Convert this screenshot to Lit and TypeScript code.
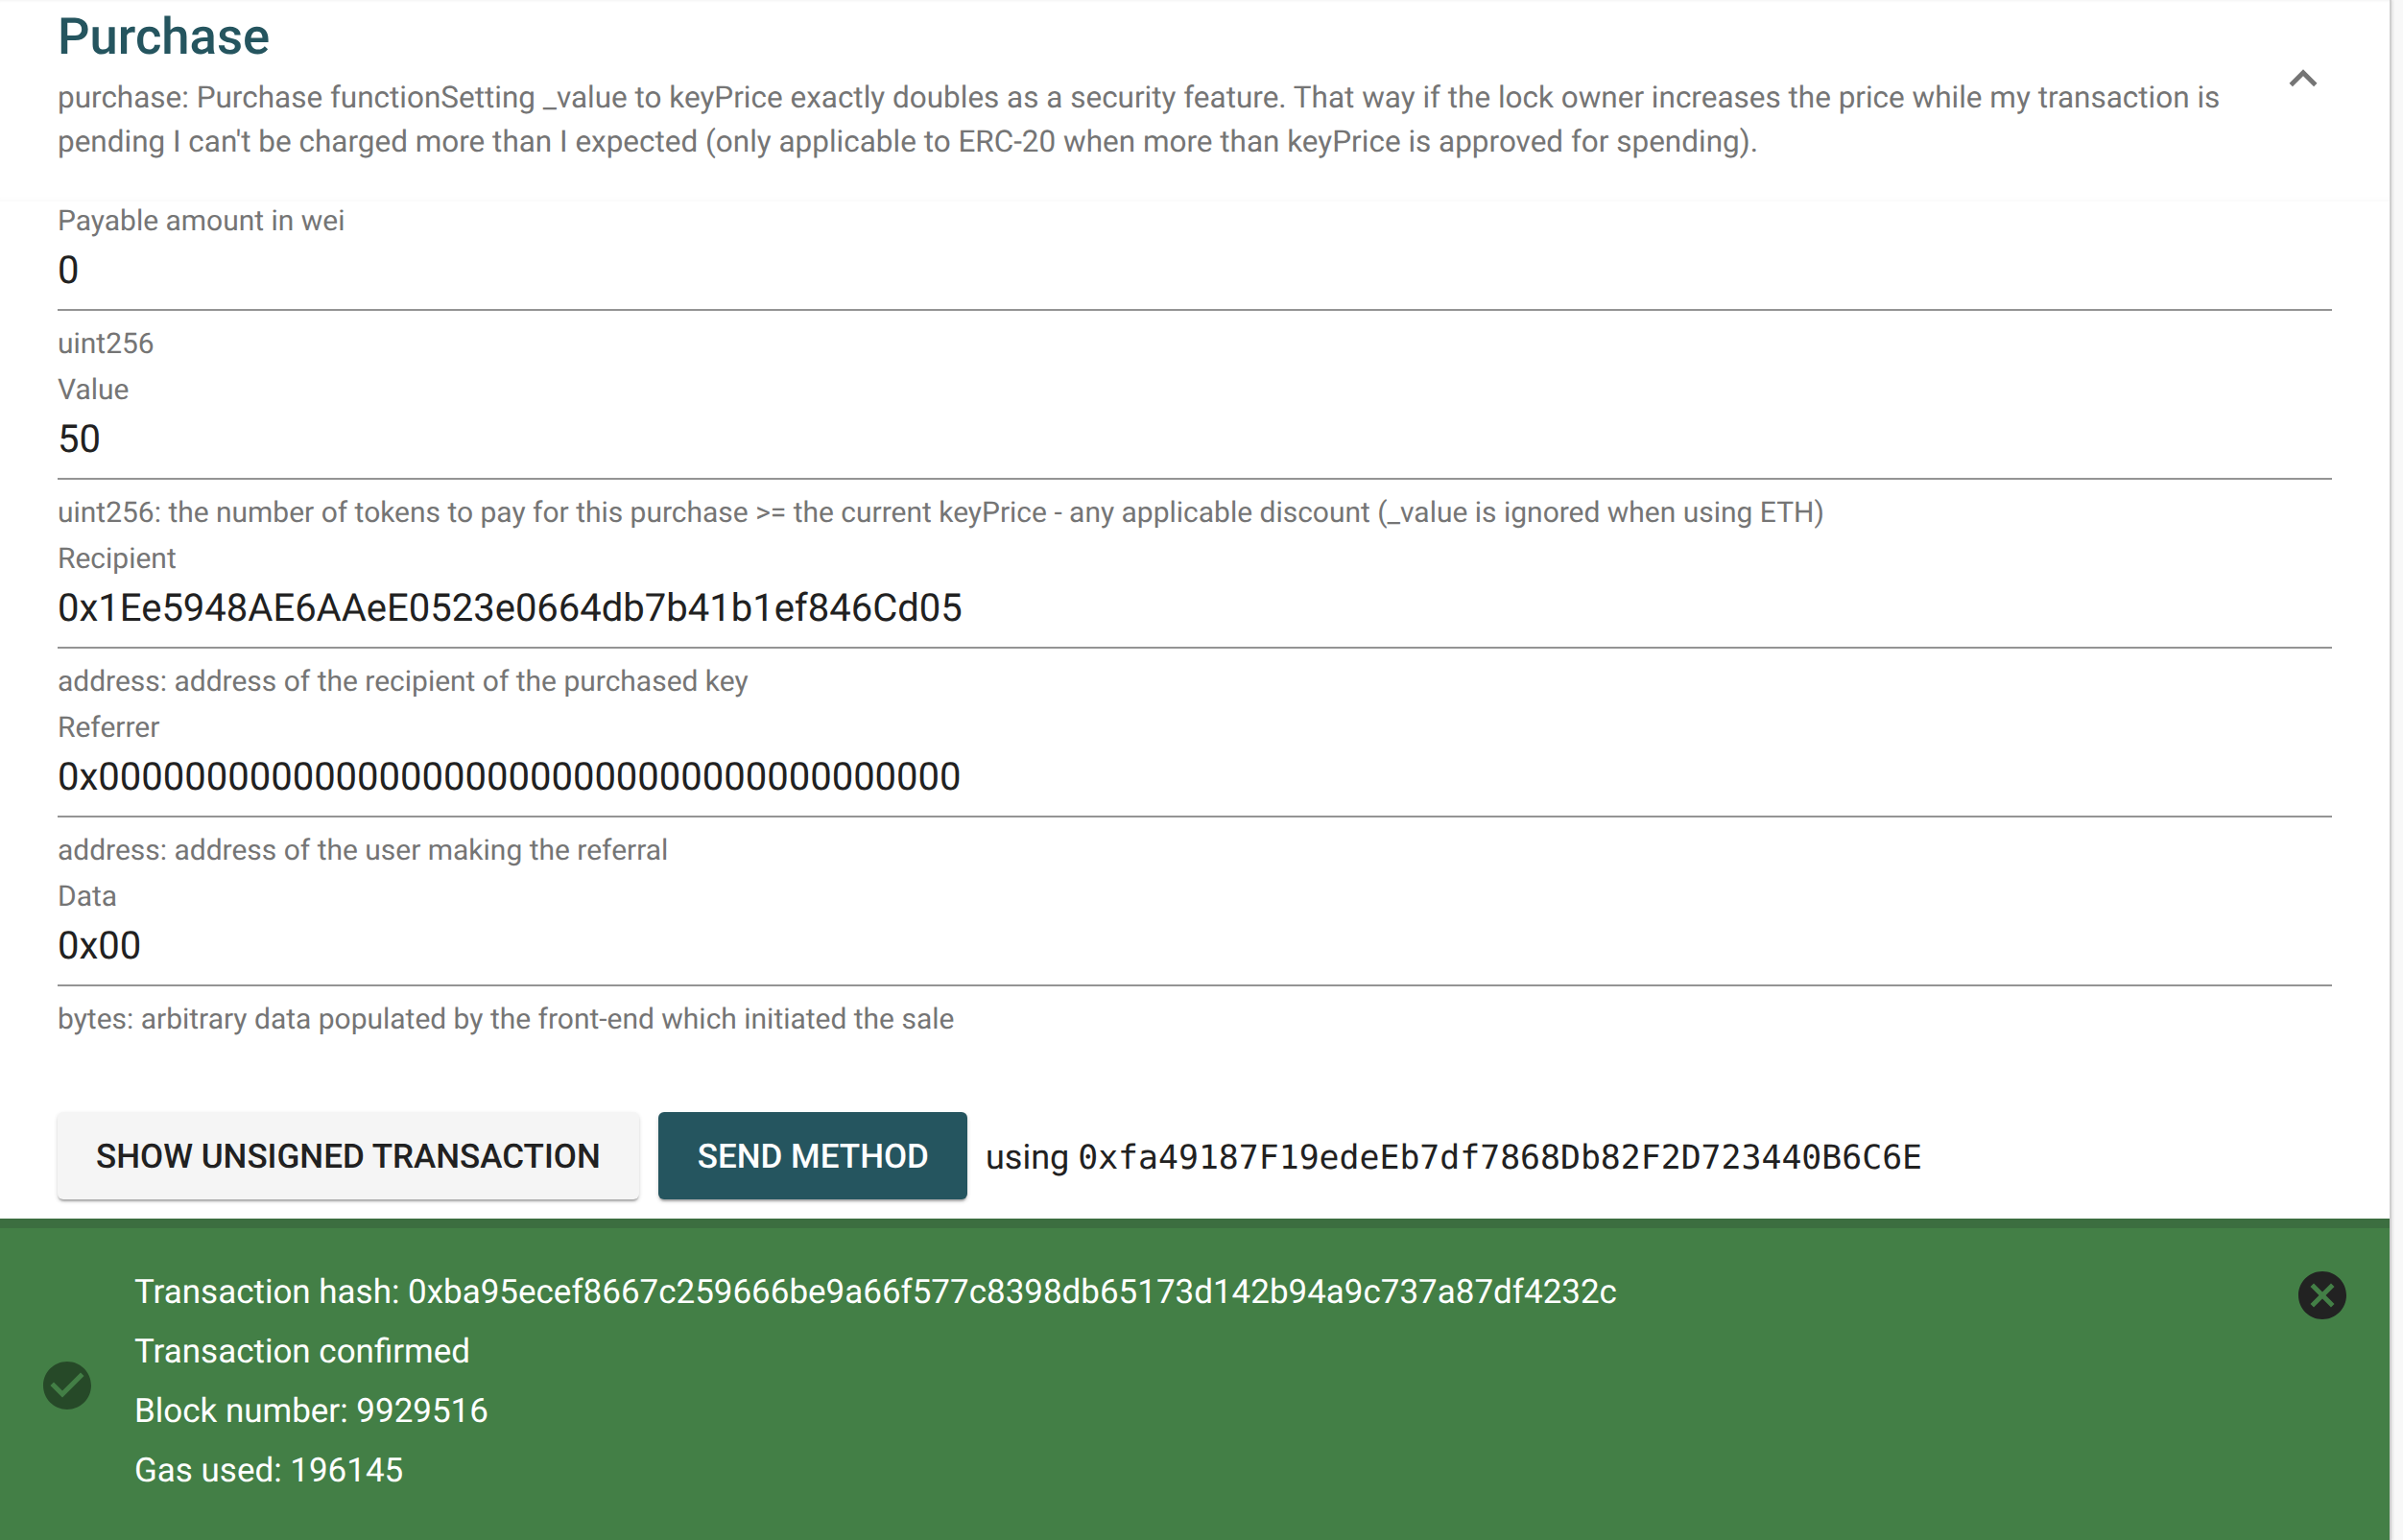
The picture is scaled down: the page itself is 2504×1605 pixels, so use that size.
import { LitElement, html, css, svg } from "lit";
import { customElement } from "lit/decorators.js";

const fields = [
  { label: "Payable amount in wei", value: "0", help: "" },
  { label: "Value", value: "50", help: "uint256: the number of tokens to pay for this purchase >= the current keyPrice - any applicable discount (_value is ignored when using ETH)", pre: "uint256" },
  { label: "Recipient", value: "0x1Ee5948AE6AAeE0523e0664db7b41b1ef846Cd05", help: "address: address of the recipient of the purchased key" },
  { label: "Referrer", value: "0x0000000000000000000000000000000000000000", help: "address: address of the user making the referral" },
  { label: "Data", value: "0x00", help: "bytes: arbitrary data populated by the front-end which initiated the sale" },
];

@customElement("app-root")
export class AppRoot extends LitElement {
  static styles = css`
    :host { display: block; width: 2504px; height: 1605px; overflow: hidden; background: #f8f8f8; font-family: Roboto, "Noto Sans", sans-serif; text-rendering: geometricPrecision; }
    .page { width: 2490px; height: 1605px; background: #fff; border-right: 2px solid #cfcfcf; box-shadow: 2px 0 2px #e6e6e6; display: flex; flex-direction: column; }
    .head { height: 210px; flex: none; box-sizing: border-box; padding: 0 60px; display: flex; align-items: flex-start; gap: 40px; background: #fff; box-shadow: inset 0 3px 3px -2px rgba(0,0,0,.05), inset 0 -8px 6px -6px rgba(0,0,0,.025); }
    .head-text { flex: 1; }
    h1 { margin: 0; font-size: 52.6px; line-height: 76px; font-weight: 500; color: #25555f; }
    .desc { font-size: 31.47px; line-height: 46px; color: #757575; margin-top: 3px; }
    .chev { width: 58px; height: 58px; margin-top: 53px; margin-right: 1px; fill: #757575; flex: none; }
    .form { padding: 0 60px; flex: 1; display: flex; flex-direction: column; }
    .field { display: flex; flex-direction: column; }
    .lab { font-size: 29.97px; line-height: 42px; color: #757575; margin-top: 3px; }
    .field:first-child .lab { margin-top: 0; }
    .val { font-size: 40px; line-height: 59px; height: 58px; padding-bottom: 12px; color: #212121; border-bottom: 2px solid #949494; }
    .help { font-size: 29.97px; line-height: 48px; color: #757575; margin-top: 11px; }
    .actions { display: flex; align-items: center; gap: 20px; margin-top: 72px; }
    .btn { height: 91px; box-sizing: border-box; border-radius: 6px; padding: 2px 40px 0; font-size: 35px; font-weight: 500; display: flex; align-items: center; box-shadow: 0 3px 2px -1px rgba(0,0,0,.25), 0 2px 4px rgba(0,0,0,.16); }
    .btn.light { background: #f5f5f5; color: #212121; }
    .btn.dark { background: #25555f; color: #fff; padding-left: 41px; }
    .using { font-size: 36px; color: #212121; padding-top: 2px; margin-left: -1px; }
    .mono { font-family: "DejaVu Sans Mono", monospace; font-size: 34.8px; }
    .note { height: 335px; flex: none; box-sizing: border-box; background: #437f46; border-top: 10px solid #3c6e40; display: flex; align-items: center; position: relative; padding-left: 40px; }
    .ok { width: 60px; height: 60px; fill: rgba(0,0,0,.42); flex: none; margin-top: 3px; }
    .lines { margin-left: 40px; color: #fff; font-size: 34.97px; line-height: 62px; margin-top: -5px; }
    .close { position: absolute; left: 2390px; top: 40px; width: 60px; height: 60px; fill: #222; }
  `;

  render() {
    return html`<div class="page">
      <div class="head">
        <div class="head-text">
          <h1>Purchase</h1>
          <div class="desc">purchase: Purchase functionSetting _value to keyPrice exactly doubles as a security feature. That way if the lock owner increases the price while my transaction is pending I can't be charged more than I expected (only applicable to ERC-20 when more than keyPrice is approved for spending).</div>
        </div>
        <svg class="chev" viewBox="0 0 24 24">${svg`<path d="M12 8l-6 6 1.41 1.41L12 10.83l4.59 4.58L18 14z"/>`}</svg>
      </div>
      <div class="form">
        ${fields.map(f => html`<div class="field">
          ${f.pre ? html`<div class="help">${f.pre}</div>` : ""}
          <div class="lab">${f.label}</div>
          <div class="val">${f.value}</div>
          ${f.help ? html`<div class="help">${f.help}</div>` : ""}
        </div>`)}
        <div class="actions">
          <div class="btn light">SHOW UNSIGNED TRANSACTION</div>
          <div class="btn dark">SEND METHOD</div>
          <div class="using">using <span class="mono">0xfa49187F19edeEb7df7868Db82F2D723440B6C6E</span></div>
        </div>
      </div>
      <div class="note">
        <svg class="ok" viewBox="0 0 24 24">${svg`<path d="M12 2C6.48 2 2 6.48 2 12s4.48 10 10 10 10-4.48 10-10S17.52 2 12 2zm-2 15l-5-5 1.41-1.41L10 14.17l7.59-7.59L19 8l-9 9z"/>`}</svg>
        <div class="lines">
          <div>Transaction hash: 0xba95ecef8667c259666be9a66f577c8398db65173d142b94a9c737a87df4232c</div>
          <div>Transaction confirmed</div>
          <div>Block number: 9929516</div>
          <div>Gas used: 196145</div>
        </div>
        <svg class="close" viewBox="0 0 24 24">${svg`<path d="M12 2C6.47 2 2 6.47 2 12s4.47 10 10 10 10-4.47 10-10S17.53 2 12 2zm5 13.59L15.59 17 12 13.41 8.41 17 7 15.59 10.59 12 7 8.41 8.41 7 12 10.59 15.59 7 17 8.41 13.41 12 17 15.59z"/>`}</svg>
      </div>
    </div>`;
  }
}
